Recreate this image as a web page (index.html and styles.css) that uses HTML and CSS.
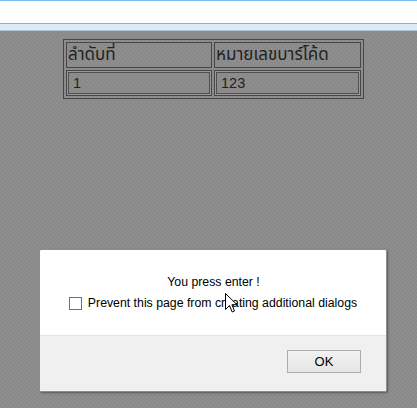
FILE: index.html
```html
<!DOCTYPE html>
<html>
<head>
<meta charset="utf-8">
<link rel="stylesheet" href="styles.css">
</head>
<body>
<div class="chrome">
  <div class="chrome-top"></div>
  <div class="chrome-bar"></div>
</div>
<main class="page">
  <table class="grid">
    <tr>
      <td class="head c1">ลำดับที่</td>
      <td class="head c2">หมายเลขบาร์โค้ด</td>
    </tr>
    <tr>
      <td class="c1"><div class="field">1</div></td>
      <td class="c2"><div class="field">123</div></td>
    </tr>
  </table>
</main>
<div class="dialog">
  <div class="dialog-body">
    <p class="message">You press enter !</p>
    <label class="prevent"><input type="checkbox" class="check"><span>Prevent this page from creating additional dialogs</span></label>
  </div>
  <div class="dialog-foot">
    <button class="ok">OK</button>
  </div>
</div>
<svg class="cursor" width="13" height="21" viewBox="0 0 13 21">
  <path d="M0.5,0.5 L0.5,16.5 L4.5,12.5 L7.2,19 L9.5,18 L6.9,11.7 L12,11.7 Z" fill="#fff" stroke="#000" stroke-width="1" stroke-linejoin="miter"/>
</svg>
</body>
</html>
```

FILE: styles.css
```css
html, body {
  margin: 0;
  padding: 0;
  height: 100%;
}
body {
  background-color: #898989;
  background-image:
    linear-gradient(45deg, rgba(255,255,255,0.04) 25%, transparent 25%, transparent 75%, rgba(255,255,255,0.04) 75%),
    linear-gradient(45deg, rgba(255,255,255,0.04) 25%, transparent 25%, transparent 75%, rgba(255,255,255,0.04) 75%);
  background-size: 4px 4px;
  background-position: 0 0, 2px 2px;
  font-family: "Liberation Sans", Arial, sans-serif;
  overflow: hidden;
  position: relative;
}
.chrome-top {
  height: 23px;
  background: #fff;
  border-top: 1px solid #79bcf2;
  box-sizing: border-box;
}
.chrome-bar {
  height: 8px;
  background: #dcebf8;
  border-top: 1px solid #78b4e6;
  border-bottom: 1px solid #b4c3d4;
  box-sizing: border-box;
}
.page {
  padding: 8px 0 0 63px;
}
.grid {
  border-collapse: separate;
  border-spacing: 2px;
  border: 1px solid #474747;
  font-family: "Liberation Sans", "Noto Sans Thai", "Noto Sans", sans-serif;
  color: #222;
}
.grid td {
  border: 1px solid #474747;
  height: 26px;
  box-sizing: border-box;
  padding: 0;
  vertical-align: middle;
}
.grid .c1 { width: 146px; }
.grid .c2 { width: 147px; }
.grid .head {
  font-size: 17px;
  padding-left: 1px;
  line-height: 24px;
}
.field {
  margin: 1px;
  border: 1px solid #4f4f4f;
  height: 20px;
  line-height: 20px;
  padding-left: 4px;
  font-size: 14.5px;
  outline: 1px solid #9a9a9a;
  outline-offset: 0;
}
.dialog {
  position: absolute;
  left: 39px;
  top: 249px;
  width: 348px;
  height: 143px;
  box-sizing: border-box;
  border: 1px solid #8e8e8e;
  border-radius: 2px;
  background: #fff;
  box-shadow: 1px 1px 2px rgba(0,0,0,0.35);
  display: flex;
  flex-direction: column;
  font-size: 12.3px;
  color: #000;
}
.dialog-body {
  height: 85px;
  box-sizing: border-box;
  padding-top: 24px;
  display: flex;
  flex-direction: column;
  align-items: center;
}
.message {
  margin: 0;
  line-height: 16px;
  margin-left: 1px;
}
.prevent {
  margin-top: 5px;
  display: flex;
  align-items: center;
  gap: 6px;
  line-height: 16px;
}
.check {
  appearance: none;
  -webkit-appearance: none;
  margin: 0;
  width: 13px;
  height: 13px;
  border: 1px solid #707070;
  background: #fff;
  box-sizing: border-box;
}
.dialog-foot {
  flex: 1;
  background: #f0f0f0;
  border-top: 1px solid #e3e3e3;
  display: flex;
  justify-content: flex-end;
  align-items: flex-start;
  padding: 14px 25px 0 0;
}
.ok {
  width: 74px;
  height: 23px;
  border: 1px solid #adadad;
  background: linear-gradient(#f2f2f2, #e5e5e5);
  font-family: "Liberation Sans", Arial, sans-serif;
  font-size: 13px;
  color: #000;
  padding: 0;
  border-radius: 0;
}
.cursor {
  position: absolute;
  left: 225px;
  top: 293px;
}
```
